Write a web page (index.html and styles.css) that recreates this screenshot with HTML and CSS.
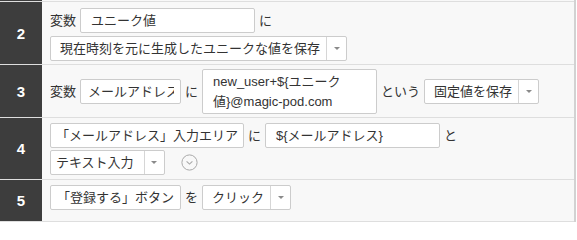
FILE: index.html
```html
<!DOCTYPE html>
<html lang="ja">
<head>
<meta charset="utf-8">
<title>Steps</title>
<link rel="stylesheet" href="styles.css">
</head>
<body>
<div class="list">
  <div class="row row-prev">
    <div class="num"></div>
    <div class="body"></div>
  </div>

  <div class="row row-2">
    <div class="num">2</div>
    <div class="body">
      <div class="line">
        <span class="word">変数</span>
        <span class="input">ユニーク値</span>
        <span class="word">に</span>
      </div>
      <div class="line line-gap">
        <span class="select"><span class="select-text">現在時刻を元に生成したユニークな値を保存</span><span class="select-arrow"><span class="tri"></span></span></span>
      </div>
    </div>
  </div>

  <div class="row row-3">
    <div class="num">3</div>
    <div class="body body-center">
      <div class="line">
        <span class="word">変数</span>
        <span class="input input-var"><span class="clip">メールアドレス</span></span>
        <span class="word">に</span>
        <span class="textarea">new_user+${ユニーク<br>値}@magic-pod.com</span>
        <span class="word">という</span>
        <span class="select"><span class="select-text">固定値を保存</span><span class="select-arrow"><span class="tri"></span></span></span>
      </div>
    </div>
  </div>

  <div class="row row-4">
    <div class="num">4</div>
    <div class="body">
      <div class="line">
        <span class="box">「メールアドレス」入力エリア</span>
        <span class="word">に</span>
        <span class="input">${メールアドレス}</span>
        <span class="word">と</span>
      </div>
      <div class="line line-gap-sm">
        <span class="select"><span class="select-text select-text-tight">テキスト入力</span><span class="select-arrow"><span class="tri"></span></span></span>
        <span class="circle-btn">
          <svg width="17" height="17" viewBox="0 0 17 17"><circle cx="8.5" cy="8.5" r="7.6" fill="none" stroke="#a9a9a9" stroke-width="1"/><path d="M5.6 7.3 L8.5 10.1 L11.4 7.3" fill="none" stroke="#a9a9a9" stroke-width="1.1"/></svg>
        </span>
      </div>
    </div>
  </div>

  <div class="row row-5">
    <div class="num">5</div>
    <div class="body">
      <div class="line">
        <span class="box box-wide">「登録する」ボタン</span>
        <span class="word">を</span>
        <span class="select"><span class="select-text">クリック</span><span class="select-arrow"><span class="tri"></span></span></span>
      </div>
    </div>
  </div>
</div>
</body>
</html>
```

FILE: styles.css
```css
html, body {
  margin: 0;
  padding: 0;
  background: #ffffff;
}

body {
  font-family: "Liberation Sans", "Noto Sans CJK JP", sans-serif;
  font-size: 13px;
  color: #333333;
}

.list {
  width: 574px;
  border-right: 2px solid #d2d2d2;
}

.row {
  display: flex;
  border-bottom: 1px solid #dedede;
}

.num {
  width: 42px;
  flex: none;
  background: #3d3d3d;
  color: #ffffff;
  font-weight: bold;
  font-size: 15px;
  display: flex;
  align-items: center;
  justify-content: center;
}

.body {
  flex: 1;
  background: #f8f8f8;
  padding: 6px 8px 3px;
  display: flex;
  flex-direction: column;
}

.body-center {
  justify-content: center;
}

.row-prev .num,
.row-prev .body {
  height: 1px;
  padding: 0;
}

.row-3 .body {
  padding: 4px 8px 3px;
}

.row-4 .body {
  padding: 5px 8px 4px;
}

.row-5 .body {
  padding: 5px 8px 11px;
}

.line {
  display: flex;
  align-items: center;
  gap: 4px;
  line-height: 20px;
}

.line-gap {
  margin-top: 3px;
}

.line-gap-sm {
  margin-top: 2px;
}

.word {
  white-space: nowrap;
}

.input {
  box-sizing: border-box;
  width: 175px;
  height: 25px;
  padding: 0 10px;
  background: #ffffff;
  border: 1px solid #cccccc;
  border-radius: 2px;
  display: flex;
  align-items: center;
  white-space: nowrap;
  overflow: hidden;
}

.input-var {
  width: 101px;
  padding: 0 6px 0 7px;
}

.clip {
  display: block;
  width: 86px;
  overflow: hidden;
  white-space: nowrap;
}

.textarea {
  box-sizing: border-box;
  width: 175px;
  height: 45px;
  padding: 2px 10px;
  background: #ffffff;
  border: 1px solid #cccccc;
  border-radius: 2px;
  line-height: 20px;
  white-space: nowrap;
  overflow: hidden;
}

.box {
  box-sizing: border-box;
  height: 25px;
  padding: 0 5px;
  background: #ffffff;
  border: 1px solid #cccccc;
  border-radius: 2px;
  display: flex;
  align-items: center;
  white-space: nowrap;
}

.box-wide {
  padding: 0 6px;
}

.select {
  box-sizing: border-box;
  height: 25px;
  background: #ffffff;
  border: 1px solid #cccccc;
  border-radius: 2px;
  display: flex;
  align-items: stretch;
  white-space: nowrap;
}

.select-text {
  display: flex;
  align-items: center;
  padding: 0 6px 0 9px;
}

.select-text-tight {
  padding: 0 10px 0 5px;
}

.select-arrow {
  width: 19px;
  border-left: 1px solid #d6d6d6;
  display: flex;
  align-items: center;
  justify-content: center;
}

.tri {
  width: 0;
  height: 0;
  border-left: 3px solid transparent;
  border-right: 3px solid transparent;
  border-top: 3px solid #8a8a8a;
}

.circle-btn {
  margin-left: 12px;
  width: 17px;
  height: 17px;
  display: flex;
}
```
